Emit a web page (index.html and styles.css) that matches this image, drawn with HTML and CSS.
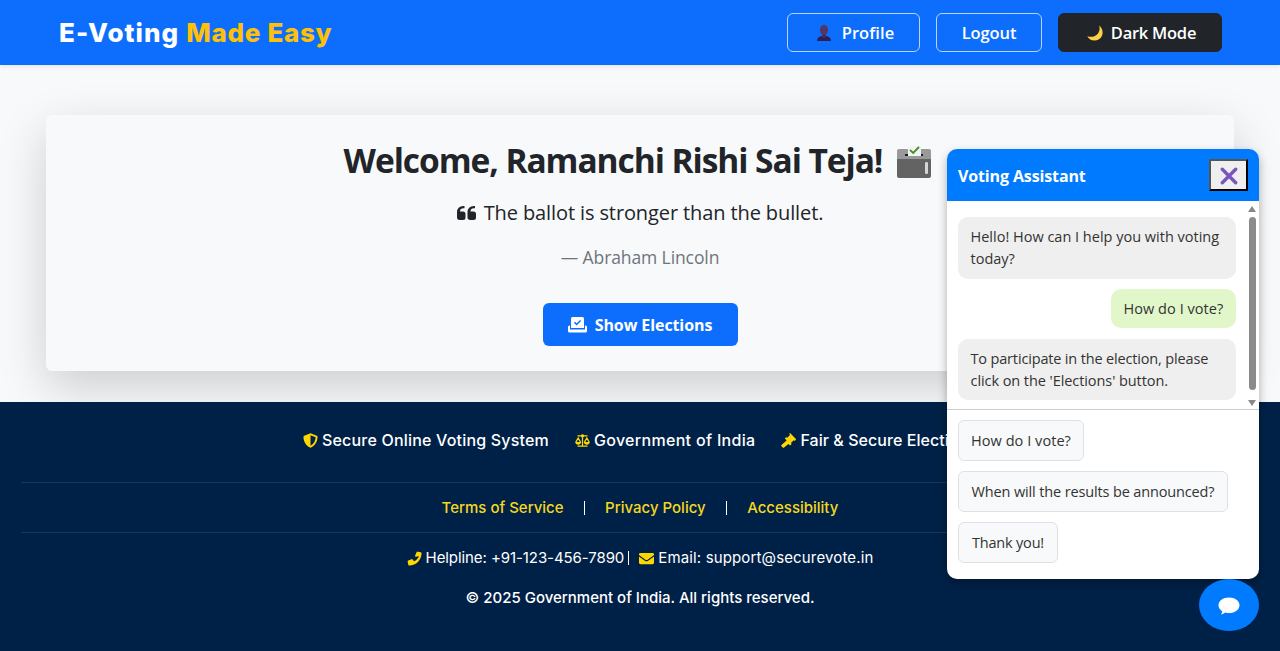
FILE: index.html
```html
<!DOCTYPE html>
<html lang="en">
<head>
<meta charset="utf-8">
<title>E-Voting Made Easy</title>
<link rel="stylesheet" href="styles.css">
</head>
<body>
<header class="navbar">
  <div class="brand"><span class="t brand-a">E-Voting</span><span class="t brand-b">Made Easy</span></div>
  <nav class="nav-actions">
    <button class="btn btn-profile">
      <svg class="ico-user" viewBox="0 0 16 16"><path d="M1 16c0-3 2-4.600 5-5h4c3 .4 5 2 5 5z" fill="#2f1d54"/><path d="M6 9h4v2.500l-2 1.200-2-1.200z" fill="#4a2f5e"/><ellipse cx="8" cy="5" rx="4" ry="5" fill="#533566"/></svg>
      <span class="t t-profile">Profile</span></button>
    <button class="btn btn-logout"><span class="t t-logout">Logout</span></button>
    <button class="btn btn-dark">
      <svg class="ico-moon" viewBox="0 0 16 16"><path d="M12.200 .5c4.600 3.500 4.600 10.500-.2 13.700C7.500 17 2.300 15.300 .3 11.200c4 1.400 8.200.6 10.500-2.400C12.700 6.300 13 3.200 12.200.5z" fill="#fcd146"/></svg>
      <span class="t t-dark">Dark Mode</span></button>
  </nav>
</header>

<main class="main">
  <section class="card">
    <h1 class="welcome"><span class="t t-h1">Welcome, Ramanchi Rishi Sai Teja!</span>
      <svg class="ico-box" viewBox="0 0 34 32"><rect y="3" width="34" height="14" rx="2" fill="#999"/><path d="M0 13h34v17q0 2-2 2H2q-2 0-2-2z" fill="#636363"/><path d="M8 8h18v2H8z" fill="#1c1838"/><path d="M11 0h13v10H11z" fill="#f3f3f3"/><path d="M13 4l3.200 3L22 1" fill="none" stroke="#3f9322" stroke-width="1.800"/><rect x="28" y="16" width="3" height="12" rx="1.200" fill="#d5d5d5"/></svg>
    </h1>
    <p class="quote">
      <svg class="ico-quote" viewBox="0 0 19 14"><path d="M7.500 0v2.300h-1C4.300 2.300 3 3.400 3 5.500h3q2.500 0 2.500 2.500v3.500Q8.500 14 6 14H2.700Q0 14 0 11.300V6.500Q0 0 6.500 0zM18 0v2.300h-1c-2.200 0-3.500 1.100-3.500 3.200h3q2.500 0 2.500 2.500v3.500Q19 14 16.500 14h-3.300q-2.700 0-2.700-2.700V6.500Q10.500 0 17 0z" fill="#212529"/></svg>
      <span class="t t-quote">The ballot is stronger than the bullet.</span></p>
    <p class="author"><span class="t t-author">— Abraham Lincoln</span></p>
    <button class="show-btn">
      <svg class="ico-vote" viewBox="0 0 19 16"><path d="M4.500 0h10q1.500 0 1.500 1.500V11H3V1.500Q3 0 4.500 0z" fill="#fff"/><path d="M6.500 5.300L8.600 7.500 12.600 3.400" fill="none" stroke="#0d6efd" stroke-width="1.500"/><path d="M2 8.500H1.500Q0 8.500 0 10v4q0 1.500 1.500 1.500h16Q19 15.500 19 14v-4q0-1.500-1.500-1.500H17V12.500H2z" fill="#fff"/></svg>
      <span class="t t-show">Show Elections</span></button>
  </section>
</main>

<footer class="footer">
  <div class="features">
    <span class="feature"><svg viewBox="0 0 16 16"><path d="M8 .2l6.800 2.800q.7.300.7 1C15.500 9.500 12.500 14 8 15.800 3.500 14 .5 9.500.5 4q0-.7.700-1zM8 2.300v11.200c3.400-1.700 5.300-5 5.500-8.900z" fill="#ffd700" fill-rule="evenodd"/></svg><span class="t t-f1">Secure Online Voting System</span></span>
    <span class="feature"><svg viewBox="0 0 18 16"><g fill="none" stroke="#ffd700" stroke-width="1.500"><path d="M3 2.500h12M9 1v13.500M3 14.800h12M1 10l2.800-5L6.600 10M11.400 10l2.800-5 2.800 5"/></g><path d="M.2 9.700h7.200Q6.800 13 3.800 13T.2 9.700zM10.600 9.700h7.200q-.6 3.300-3.600 3.300t-3.600-3.300z" fill="#ffd700"/><circle cx="9" cy="2.400" r="1.900" fill="#ffd700"/></svg><span class="t t-f2">Government of India</span></span>
    <span class="feature"><svg viewBox="0 0 16 16"><path d="M8.700.3q.6-.5 1.200 0l5.800 5.800q.5.600 0 1.200l-.6.600q-.6.500-1.200 0l-.3-.2-3 3 .3.300q.5.600 0 1.200l-.6.600q-.6.500-1.200 0L7.900 11.600 3.300 15.500q-.7.600-1.400 0L.5 14.100q-.6-.7 0-1.400L5.100 8.800l1-1L4.500 6.500q-.5-.6 0-1.200l.6-.6q.6-.5 1.200 0l.3.300 3-3-.3-.3q-.5-.6 0-1.200z" fill="#ffd700"/></svg><span class="t t-f3">Fair &amp; Secure Elections</span></span>
  </div>
  <div class="links">
    <a class="t">Terms of Service</a><i class="sep"></i><a class="t">Privacy Policy</a><i class="sep"></i><a class="t">Accessibility</a>
  </div>
  <div class="contact">
    <svg viewBox="0 0 16 16"><path d="M11.400.7l3.200.7q.9.200.9 1.100C15.500 9.800 9.700 15.500 2.500 15.500q-.9 0-1.100-.9L.7 11.400q-.2-.8.600-1.200l3.500-1.500q.7-.3 1.200.3l1.500 1.900c2.400-1.100 4.300-3 5.400-5.400L9 6q-.6-.5-.3-1.200L10.200 1.300q.4-.8 1.200-.6z" fill="#ffd700"/></svg>
    <span class="t t-help">Helpline: +91-123-456-7890</span><i class="bar"></i>
    <svg viewBox="0 0 16 16"><path d="M1.500 2h13Q16 2 16 3.500v.7l-6.800 5q-1.200.8-2.400 0L0 4.200v-.7Q0 2 1.500 2zM0 5.800l6.200 4.500q1.800 1.200 3.600 0L16 5.800v6.700q0 1.500-1.500 1.500h-13Q0 14 0 12.500z" fill="#ffd700"/></svg>
    <span class="t t-mail">Email: support@securevote.in</span>
  </div>
  <div class="copyright"><span class="t">© 2025 Government of India. All rights reserved.</span></div>
</footer>

<aside class="chat">
  <div class="chat-head"><span class="t t-va">Voting Assistant</span>
    <button class="close"><svg viewBox="0 0 18 18"><path d="M2.300 2.300l13.400 13.400M15.700 2.300L2.300 15.700" stroke="#7856be" stroke-width="3.400" stroke-linecap="round"/></svg></button></div>
  <div class="chat-body">
    <div class="messages">
      <div class="msg bot"><span class="t">Hello! How can I help you with voting</span><br><span class="t">today?</span></div>
      <div class="msg user"><span class="t t-ask">How do I vote?</span></div>
      <div class="msg bot"><span class="t t-m4">To participate in the election, please</span><br><span class="t t-m5">click on the 'Elections' button.</span></div>
    </div>
    <div class="scroll"><i class="up"></i><i class="thumb"></i><i class="down"></i></div>
  </div>
  <div class="suggest">
    <button class="chip chip-a"><span class="t t-ask">How do I vote?</span></button>
    <button class="chip chip-b"><span class="t t-c2">When will the results be announced?</span></button>
    <button class="chip chip-c"><span class="t t-c3">Thank you!</span></button>
  </div>
</aside>
<button class="fab"><svg viewBox="0 0 22 18"><path d="M11 .5c6 0 10.500 3.300 10.500 7.700S17 16 11 16q-2 0-3.700-.5Q5.500 17 3 17.500q1-1.500 1.200-3.300Q.5 11.800.5 8.200C.5 3.800 5 .5 11 .5z" fill="#fff"/></svg></button>
</body>
</html>
```

FILE: styles.css
```css
* { box-sizing: border-box; }
body { margin: 0; background: #f8f9fa; font-family: "Open Sans", "Noto Sans", sans-serif; color: #212529; height: 651px; overflow: hidden; display: flex; flex-direction: column; }
button { font: inherit; padding: 0; border: 0; margin: 0; }
.t { white-space: nowrap; }
svg { display: block; flex: none; }

.navbar { height: 65px; flex: none; background: #0d6efd; display: flex; align-items: center; justify-content: space-between; padding: 0 58px 0 59px; box-shadow: 0 2px 4px rgba(0,0,0,.075); position: relative; }
.brand { display: flex; gap: 7px; font: 800 26px/40px Inter, sans-serif; color: #fff; }
.brand-a { letter-spacing: 1.05px; }
.brand-b { color: #ffc107; letter-spacing: .7px; }
.nav-actions { display: flex; gap: 16px; }
.btn { height: 39px; border: 1px solid #b6d4fe; border-radius: 6px; background: transparent; color: #fff; font-weight: 600; font-size: 16.5px; display: flex; align-items: center; justify-content: center; gap: 10px; }
.btn-profile { width: 133px; padding-left: 3px; }
.btn-logout { width: 106px; }
.btn-dark { width: 164px; background: #212529; border-color: #212529; gap: 8px; padding-left: 3px; }
.t-profile { letter-spacing: .1px; }
.t-logout { letter-spacing: -.1px; }
.t-dark { letter-spacing: -.25px; }
.ico-user, .ico-moon { width: 16px; height: 16px; margin-top: 1px; }

.main { height: 337px; flex: none; padding: 50px 46px 31px; }
.card { height: 256px; background: #f8f9fa; border-radius: 6px; box-shadow: 0 16px 48px rgba(0,0,0,.175); display: flex; flex-direction: column; align-items: center; padding-top: 23px; }
.welcome { margin: 0 0 0 -5px; height: 44px; display: flex; align-items: center; gap: 15px; font-size: 33.5px; font-weight: 700; line-height: 44px; }
.t-h1 { letter-spacing: -1.06px; }
.ico-box { width: 34px; height: 32px; margin-top: 3px; }
.quote { margin: 16px 0 0; height: 30px; display: flex; align-items: center; gap: 8px; font-size: 20px; line-height: 30px; }
.t-quote { letter-spacing: -.11px; }
.ico-quote { width: 19px; height: 14px; }
.author { margin: 16px 0 0; height: 26px; font-size: 17.5px; line-height: 26px; color: #6c757d; }
.t-author { letter-spacing: -.1px; }
.show-btn { margin-top: 33px; width: 195px; height: 43px; border-radius: 6px; background: #0d6efd; color: #fff; font-weight: 700; font-size: 16px; display: flex; align-items: center; justify-content: center; gap: 8px; }
.t-show { letter-spacing: -.09px; }
.ico-vote { width: 19px; height: 16px; }

.footer { flex: 1; background: #002147; color: #fff; padding: 0 21px; font-family: Inter, sans-serif; position: relative; }
.features { height: 81px; padding-bottom: 5px; display: flex; align-items: center; justify-content: center; gap: 26px; font-size: 16px; font-weight: 500; border-bottom: 1px solid #1a375a; }
.feature { display: flex; align-items: center; gap: 4px; }
.feature svg { margin-top: 2px; }
.t-f1 { letter-spacing: .19px; }
.t-f2 { letter-spacing: .31px; }
.t-f3 { letter-spacing: .06px; }
.feature svg, .contact svg { width: 15px; height: 15px; }
.links { height: 50px; display: flex; align-items: center; justify-content: center; gap: 20px; font-size: 15px; font-weight: 500; color: #f4d81f; border-bottom: 1px solid #1a375a; }
.sep, .bar { width: 1.5px; height: 14px; background: #fff; }
.contact { height: 50px; display: flex; align-items: center; justify-content: center; font-size: 15px; gap: 4px; }
.contact .t { margin-top: -1px; }
.t-help { letter-spacing: -.08px; }
.t-mail { letter-spacing: .14px; }
.bar { margin-right: 6px; width: 1px; }
.copyright { height: 30px; text-align: center; font-size: 15px; font-weight: 500; line-height: 30px; }

.chat { position: absolute; left: 947px; top: 149px; width: 312px; height: 430px; border-radius: 10px; background: #fff; overflow: hidden; box-shadow: 0 4px 10px rgba(0,0,0,.3); color: #333; font-size: 14.5px; }
.chat-head { height: 52px; background: #007bff; color: #fff; font-weight: 700; font-size: 16px; display: flex; justify-content: space-between; align-items: center; padding: 0 11px; }
.t-va { letter-spacing: -.13px; margin-top: 2px; }
.close { width: 39px; height: 32px; border: 2px outset #000; background: #efefef; display: flex; align-items: center; justify-content: center; }
.close svg { width: 18px; height: 18px; margin-top: 1px; }
.chat-body { height: 209px; display: flex; border-bottom: 1px solid #ccc; }
.messages { width: 289px; padding: 16px 0 0 11px; display: flex; flex-direction: column; gap: 10.5px; }
.msg { border-radius: 10px; padding: 9px 12.5px 8px; line-height: 22.25px; background: #efefef; }
.msg.user { align-self: flex-end; background: #e1f7ca; width: 125px; }
.t-ask { letter-spacing: .05px; }
.t-m4 { letter-spacing: -.16px; }
.t-m5 { letter-spacing: -.07px; }
.t-c2 { letter-spacing: -.14px; }
.t-c3 { letter-spacing: -.2px; }
.scroll { width: 20px; padding: 5px 0 0 12.5px; display: flex; flex-direction: column; align-items: center; }
.up, .down { border: 4.5px solid transparent; border-top: 0; border-bottom: 6px solid #888; }
.down { border-top: 6px solid #888; border-bottom: 0; margin-top: 10px; }
.thumb { width: 7px; height: 173px; border-radius: 4px; background: #8b8b8b; margin-top: 5px; }
.suggest { padding: 10px 11px; display: flex; flex-direction: column; gap: 10px; }
.chip { height: 41px; border: 1px solid #dee2e6; border-radius: 6px; background: #f8f9fa; color: #333; display: flex; align-items: center; justify-content: center; padding-bottom: 1px; }
.chip-a { width: 126px; }
.chip-b { width: 270px; }
.chip-c { width: 100px; }
.fab { position: absolute; left: 1199px; top: 579px; width: 60px; height: 52px; border-radius: 50%; background: #007bff; display: flex; align-items: center; justify-content: center; }
.fab svg { width: 22px; height: 18px; margin-top: 1px; }
```
